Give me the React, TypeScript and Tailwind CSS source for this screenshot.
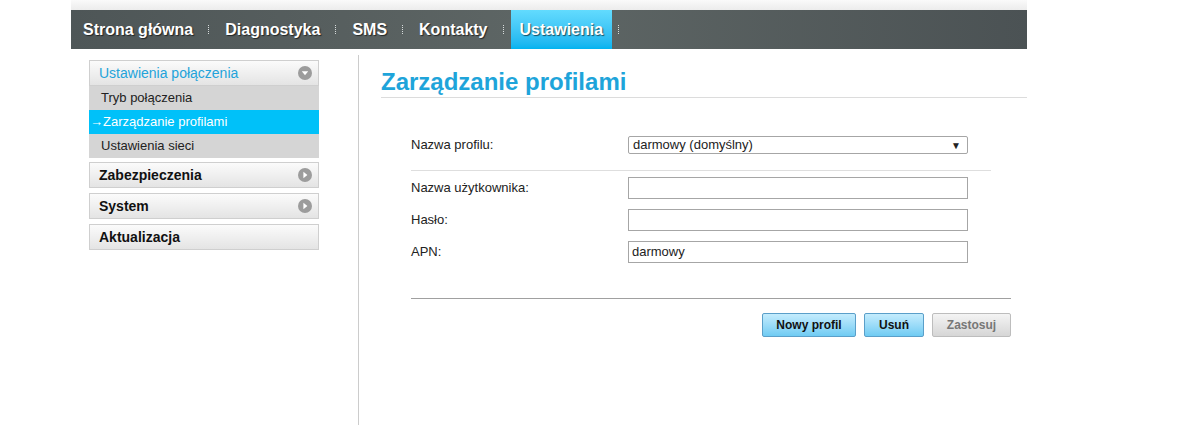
import React from 'react'

const navItems = ['Strona główna', 'Diagnostyka', 'SMS', 'Kontakty', 'Ustawienia']

const Separator = () => (
  <span className="ml-[6px] mr-[7px] h-[9px] w-[1px] border-l border-dotted border-[#d8dcdc]" />
)

const CircleArrow = ({ down }: { down?: boolean }) => (
  <svg width="14" height="14" viewBox="0 0 14 14">
    <circle cx="7" cy="7" r="7" fill="#9c9c9c" />
    {down ? <path d="M3.8 5.2h6.4L7 9.2z" fill="#fff" /> : <path d="M5.4 3.8v6.4L9.4 7z" fill="#fff" />}
  </svg>
)

const MenuBox = ({ label, arrow }: { label: string; arrow?: boolean }) => (
  <div className="flex h-[26px] items-center justify-between border border-[#cfcfcf] bg-gradient-to-b from-[#fbfbfb] to-[#e4e4e4] pl-[9px] pr-[6px] text-[14px] font-bold text-[#111]">
    <span>{label}</span>
    {arrow && <CircleArrow />}
  </div>
)

const FormRow = ({ label, value }: { label: string; value?: string }) => (
  <div className="flex h-[22px] items-center">
    <span className="w-[217px] text-[13px] text-[#222]">{label}</span>
    <div className="flex h-[22px] w-[340px] items-center border border-[#a6a6a6] bg-white pl-[3px] text-[13px] text-[#222]">
      {value}
    </div>
  </div>
)

export default function App() {
  return (
    <div className="h-[425px] w-[1201px] bg-white font-['Liberation_Sans',Arial,sans-serif]">
      <div className="ml-[71px] w-[956px]">
        {/* Header */}
        <div className="h-[10px] bg-gradient-to-b from-[#fafafa] to-[#ececec]" />
        <div className="flex h-[39px] items-center bg-gradient-to-r from-[#4e5657] via-[#5e6665] to-[#4b5254] pl-[3px]">
          {navItems.map((item) => {
            const active = item === 'Ustawienia'
            return (
              <React.Fragment key={item}>
                <div
                  className={`flex h-[39px] items-center px-[9px] text-[16px] font-bold text-white [text-shadow:1px_1px_1px_rgba(0,0,0,0.6)] ${
                    active ? 'bg-gradient-to-b from-[#62dbfe] to-[#00b3ef]' : ''
                  }`}
                >
                  {item}
                </div>
                <Separator />
              </React.Fragment>
            )
          })}
        </div>

        {/* Body */}
        <div className="flex h-[376px]">
          <div className="w-[287px] pl-[18px] pt-[11px]">
            <div className="w-[230px]">
              <div className="flex h-[26px] items-center justify-between border border-[#cfcfcf] bg-gradient-to-b from-[#fbfbfb] to-[#e4e4e4] pl-[9px] pr-[6px] text-[14px] text-[#23a3da]">
                <span>Ustawienia połączenia</span>
                <CircleArrow down />
              </div>
              <div className="bg-[#d5d5d5] text-[13px] text-[#222]">
                <div className="flex h-[24px] items-center pl-[12px]">Tryb połączenia</div>
                <div className="flex h-[24px] items-center bg-[#00c1f9] pl-[1px] text-white">→Zarządzanie profilami</div>
                <div className="flex h-[24px] items-center pl-[12px]">Ustawienia sieci</div>
              </div>
              <div className="mt-[4px] flex flex-col gap-[5px]">
                <MenuBox label="Zabezpieczenia" arrow />
                <MenuBox label="System" arrow />
                <MenuBox label="Aktualizacja" />
              </div>
            </div>
          </div>

          <div className="mt-[6px] flex-1 border-l border-[#cccccc] pl-[22px] pt-[13px]">
            <h1 className="h-[30px] border-b border-[#dcdcdc] text-[24px] leading-[28px] font-bold text-[#1ea4da]">
              Zarządzanie profilami
            </h1>

            <div className="mt-[38px] ml-[30px] w-[600px]">
              <div className="flex h-[18px] items-center">
                <span className="w-[217px] text-[13px] text-[#222]">Nazwa profilu:</span>
                <div className="flex h-[18px] w-[340px] items-center justify-between rounded-[2px] border border-[#a6a6a6] bg-white pl-[4px] pr-[6px] text-[13px] text-[#222]">
                  <span>darmowy (domyślny)</span>
                  <span className="text-[10px]">▼</span>
                </div>
              </div>

              <div className="mt-[16px] w-[580px] border-t border-[#dedede]" />

              <div className="mt-[6px] flex flex-col gap-[10px]">
                <FormRow label="Nazwa użytkownika:" />
                <FormRow label="Hasło:" />
                <FormRow label="APN:" value="darmowy" />
              </div>

              <div className="mt-[35px] border-t border-[#a0a0a0]" />

              <div className="mt-[14px] flex justify-end gap-[8px]">
                <button className="h-[24px] w-[94px] rounded-[2px] border border-[#5a9fc9] bg-gradient-to-b from-[#c4ecfd] to-[#6fcbf3] text-[12px] font-bold text-[#111]">
                  Nowy profil
                </button>
                <button className="h-[24px] w-[60px] rounded-[2px] border border-[#5a9fc9] bg-gradient-to-b from-[#c4ecfd] to-[#6fcbf3] text-[12px] font-bold text-[#111]">
                  Usuń
                </button>
                <button className="h-[24px] w-[79px] rounded-[2px] border border-[#bdbdbd] bg-gradient-to-b from-[#f4f4f4] to-[#d6d6d6] text-[12px] font-bold text-[#777]">
                  Zastosuj
                </button>
              </div>
            </div>
          </div>
        </div>
      </div>
    </div>
  )
}
